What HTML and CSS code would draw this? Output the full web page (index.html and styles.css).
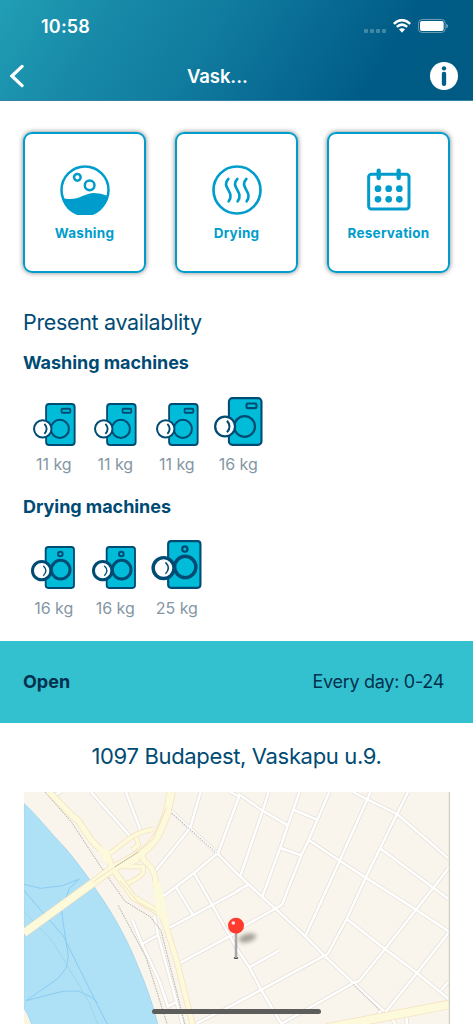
FILE: index.html
```
<!DOCTYPE html>
<html lang="en">
<head>
    <meta charset="UTF-8">
    <meta name="viewport" content="width=device-width, initial-scale=1.0">
    <title>Vaskapu</title>
    <link rel="stylesheet" href="styles.css">
</head>
<body>
    <svg class="symbols">
        <symbol id="washer" viewBox="0 0 128 128">
            <rect x="39" y="3" width="85" height="122" rx="9" fill="#00bcd8" stroke="#004b74" stroke-width="5.5"/>
            <rect x="85" y="17" width="26" height="12" rx="3" fill="none" stroke="#004b74" stroke-width="5.5"/>
            <circle cx="80" cy="77" r="27" fill="#00bcd8" stroke="#004b74" stroke-width="6"/>
            <circle cx="29" cy="77" r="26" fill="#fff" stroke="#004b74" stroke-width="6"/>
            <path d="M34 62q13 15 0 30" fill="none" stroke="#004b74" stroke-width="5.5"/>
        </symbol>
        <symbol id="dryer" viewBox="48 168 132 129">
            <rect x="92" y="171" width="85" height="123" rx="8" fill="#00bcd8" stroke="#004b74" stroke-width="5.5"/>
            <circle cx="136" cy="192" r="7" fill="none" stroke="#004b74" stroke-width="6"/>
            <circle cx="137" cy="239" r="28" fill="#00bcd8" stroke="#004b74" stroke-width="9"/>
            <circle cx="80" cy="242" r="27.5" fill="#fff" stroke="#004b74" stroke-width="9"/>
            <path d="M85 227q15 15 0 30" fill="none" stroke="#004b74" stroke-width="4"/>
        </symbol>
    </svg>

    <header>
        <div class="status-bar">
            <span class="time">10:58</span>
            <div class="status-icons">
                <div class="dots"><i></i><i></i><i></i><i></i></div>
                <svg class="wifi" viewBox="0 0 54 42">
                    <g fill="none" stroke="#fff" stroke-width="7.5">
                        <path d="M2.500 14.500Q27-8 51.500 14.500"/>
                        <path d="M11.500 23.500Q27 10 42.500 23.500"/>
                    </g>
                    <path d="M18 31q9-7 18 0l-9 10z" fill="#fff"/>
                </svg>
                <svg class="battery" viewBox="0 0 90 42">
                    <rect x="1.500" y="1.500" width="80" height="39" rx="11" fill="none" stroke="#fff" stroke-opacity=".4" stroke-width="3"/>
                    <rect x="6" y="6" width="71" height="30" rx="6" fill="#fff"/>
                    <path d="M85 14q5 2 5 7t-5 7z" fill="#fff" fill-opacity=".5"/>
                </svg>
            </div>
        </div>
        <div class="nav-bar">
            <svg class="back" viewBox="0 0 44 72"><path d="M38 6L6 36l32 30" fill="none" stroke="#fff" stroke-width="10" stroke-linecap="round"/></svg>
            <h1>Vask...</h1>
            <svg class="info" viewBox="0 0 84 84">
                <circle cx="42" cy="42" r="42" fill="#fff"/>
                <circle cx="42" cy="19" r="6.500" fill="#005e88"/>
                <rect x="35.500" y="29" width="13" height="43" rx="6" fill="#005e88"/>
            </svg>
        </div>
    </header>

    <main>
        <div class="cards">
            <a class="card">
                <svg viewBox="0 0 150 150">
                    <circle cx="75" cy="75" r="70.500" fill="none" stroke="#009dcc" stroke-width="7.500"/>
                    <circle cx="52" cy="37" r="10" fill="none" stroke="#009dcc" stroke-width="7.500"/>
                    <circle cx="89" cy="61" r="14.500" fill="none" stroke="#009dcc" stroke-width="7.500"/>
                    <path d="M6 98C50 113 70 84 102 84q20 0 42 9A70 70 0 0 1 6 98z" fill="#009dcc"/>
                </svg>
                <span>Washing</span>
            </a>
            <a class="card">
                <svg viewBox="0 0 150 150">
                    <g fill="none" stroke="#009dcc" stroke-width="8" stroke-linecap="round">
                        <circle cx="75" cy="75" r="70.500"/>
                        <path d="M49 42c-24 24 22 38 1 67M76 42c-24 24 22 38 1 67M103 42c-24 24 22 38 1 67"/>
                    </g>
                </svg>
                <span>Drying</span>
            </a>
            <a class="card">
                <svg viewBox="0 0 150 150">
                    <g fill="none" stroke="#009dcc" stroke-width="9">
                        <rect x="14" y="28" width="121" height="104" rx="8"/>
                        <path d="M44 17v22M104 17v22" stroke-width="13" stroke-linecap="round"/>
                    </g>
                    <g fill="#009dcc">
                        <circle cx="42" cy="71" r="10"/><circle cx="74" cy="71" r="10"/><circle cx="106" cy="71" r="10"/>
                        <circle cx="42" cy="103" r="10"/><circle cx="74" cy="103" r="10"/><circle cx="106" cy="103" r="10"/>
                    </g>
                </svg>
                <span>Reservation</span>
            </a>
        </div>

        <section class="availability">
            <h2>Present availablity</h2>
            <h3>Washing machines</h3>
            <div class="machines">
                <div class="machine"><svg class="washer"><use href="#washer"/></svg><span>11 kg</span></div>
                <div class="machine"><svg class="washer"><use href="#washer"/></svg><span>11 kg</span></div>
                <div class="machine"><svg class="washer"><use href="#washer"/></svg><span>11 kg</span></div>
                <div class="machine"><svg class="washer large"><use href="#washer"/></svg><span>16 kg</span></div>
            </div>
            <h3>Drying machines</h3>
            <div class="machines">
                <div class="machine"><svg class="dryer"><use href="#dryer"/></svg><span>16 kg</span></div>
                <div class="machine"><svg class="dryer"><use href="#dryer"/></svg><span>16 kg</span></div>
                <div class="machine"><svg class="dryer large"><use href="#dryer"/></svg><span>25 kg</span></div>
            </div>
        </section>

        <div class="opening">
            <strong>Open</strong>
            <span>Every day: 0-24</span>
        </div>

        <p class="address">1097 Budapest, Vaskapu u.9.</p>

        <div class="map">
            <svg viewBox="42 34 1278 699" preserveAspectRatio="none">
                <defs>
                    <filter id="blur" x="-50%" y="-50%" width="200%" height="200%"><feGaussianBlur stdDeviation="6"/></filter>
                    <linearGradient id="needle"><stop offset="0" stop-color="#808488"/><stop offset=".5" stop-color="#c4c7ca"/><stop offset="1" stop-color="#777"/></linearGradient>
                    <!-- side streets -->
                    <g id="streets">
                        <path d="M243 34L360 166M348 34L392 150M572 34L540 143L436 271M480 88L621 217L690 288M690 40L624 217L552 277L462 345L452 342M552 277L690 520M499 320L548 402M476 442L548 404L690 328M506 549L690 450M366 415L396 490L448 600L474 678L498 664M396 490L444 463M433 405L444 463L518 732M560 728L690 662M660 34L688 48M135 43L156 30"/>
                        <g transform="translate(678 0)">
                            <path d="M0 275L38 311L118 384L208 467L265 525L352 607L445 692M8 40L80 90L155 134M98 34L80 90L14 283M190 34L133 200L80 345M280 34L218 178L196 224L138 372L118 384L0 450M174 88L243 117M133 202L196 224M403 34L394 56L311 240L208 467M516 34L483 100L389 291L332 415L275 520L265 525L0 668M350 34L394 56L483 100L638 234M218 178L311 240L389 291L540 387L638 452M435 205L592 321L638 355M638 262L592 321L540 387L447 505L370 600L352 607L135 730M332 415L447 505L543 577L638 655M638 456L543 577L450 692M615 629L638 603M0 500L40 560L76 628L138 732M40 560L130 509M0 332L38 311M435 690L420 706M450 690L480 732M512 712V732"/>
                        </g>
                    </g>
                    <!-- main roads around the bridge -->
                    <g id="roads">
                        <path d="M42 457L306 265L395 216Q435 185 450 150L470 100L484 34" stroke-width="26"/>
                        <path d="M118 34L185 104L205 120L245 180L295 230L308 265L370 350L450 398" stroke-width="20"/>
                        <path d="M395 216L402 240Q430 260 435 290L450 390L472 450L500 540L548 732" stroke-width="18"/>
                        <path d="M300 218L360 172Q390 152 430 146M335 256L380 240L402 214M340 258H400V275Q390 292 352 308M378 170L386 192L366 208" stroke-width="15"/>
                    </g>
                </defs>
                <rect x="42" y="34" width="1278" height="699" fill="#f9f4ec"/>
                <path d="M42 69C80 102 110 145 170 207Q230 280 260 330C330 430 365 510 385 560Q420 640 444 733H66Q55 700 42 682z" fill="#aee1f6" stroke="#a3d8ee" stroke-width="3"/>
                <g fill="none" stroke="#8acbf3" stroke-width="3">
                    <path d="M42 311L92 323L157 315L208 295L178 324L154 385L160 430L175 525L168 563L142 595L48 660L158 632L206 631L245 650L263 666M42 330L160 466L263 674L293 732"/>
                    <path d="M42 392L130 485L235 660L264 732" stroke="#a0d5e9"/>
                </g>
                <path d="M42 705L53 733" stroke="#fbf7d2" stroke-width="8"/>
                <g fill="none" stroke-linejoin="round">
                    <use href="#streets" stroke="#e5e1da" stroke-width="12"/>
                    <use href="#streets" stroke="#fff" stroke-width="7.500"/>
                    <g stroke="#b5b1ac" stroke-width="3" stroke-dasharray="5 3">
                        <path d="M105 34L185 125L270 255L345 362L420 408L453 450L525 732M325 375L408 530L472 732M480 92L620 217M1030 610L1110 690"/>
                    </g>
                    <g stroke="#f4dfbf"><use href="#roads"/></g>
                    <g stroke="#fcfadb">
                        <path d="M42 457L306 265L395 216Q435 185 450 150L470 100L484 34" stroke-width="22"/>
                        <path d="M118 34L185 104L205 120L245 180L295 230L308 265L370 350L450 398" stroke-width="16"/>
                        <path d="M395 216L402 240Q430 260 435 290L450 390L472 450L500 540L548 732" stroke-width="14"/>
                        <path d="M300 218L360 172Q390 152 430 146M335 256L380 240L402 214M340 258H400V275Q390 292 352 308M378 170L386 192L366 208" stroke-width="11"/>
                        <path d="M205 118L250 180L300 215L308 260L285 244z" fill="#fcfadb" stroke="none"/>
                        <path d="M428 300L452 305L472 405L480 450L440 400z" fill="#fcfadb" stroke="none"/>
                    </g>
                    <path d="M248 305L310 262L385 214L430 175L470 80M330 300L385 365L440 395" stroke="#eed1b5" stroke-width="2"/>
                    <path d="M315 258L385 214" stroke="#aaa7a2" stroke-width="3" stroke-dasharray="5 3"/>
                    <path d="M950 742L1320 671" stroke="#f4dfbf" stroke-width="28"/>
                    <path d="M950 742L1320 671" stroke="#fcfadb" stroke-width="24"/>
                    <path d="M1318 34V733" stroke="#c9c5bf" stroke-width="3"/>
                </g>
                <!-- pin -->
                <ellipse cx="712" cy="472" rx="27" ry="12" transform="rotate(-15 712 472)" fill="#777269" opacity=".65" filter="url(#blur)"/>
                <ellipse cx="678" cy="532" rx="7" ry="3" fill="#444"/>
                <rect x="674.500" y="450" width="7" height="82" fill="url(#needle)"/>
                <circle cx="678" cy="435" r="24" fill="#ff3b30"/>
                <circle cx="670" cy="427" r="5.500" fill="#ffe3df"/>
            </svg>
        </div>
    </main>
    <div class="home-indicator"></div>
</body>
</html>
```
FILE: styles.css
```
* {
    box-sizing: border-box;
}

body {
    margin: 0;
    height: 1024px;
    overflow: hidden;
    background-color: #fff;
    color: #004b74;
    font-family: Inter, "Liberation Sans", sans-serif;
}

.symbols {
    display: none;
}

svg {
    display: block;
}

h1, h2, h3, p {
    margin: 0;
}

header {
    height: 101px;
    background: linear-gradient(122deg, #219eb5 0%, #188aa8 22%, #107b9e 44%, #096c94 60%, #005c86 79%, #005a84 100%);
    border-bottom: 1px solid #2f84a3;
    color: #fff;
}

.status-bar {
    display: flex;
    justify-content: space-between;
    height: 52px;
    padding: 0 25px 0 41px;
}

.time {
    padding-top: 15px;
    font-size: 18px;
    line-height: 23px;
    font-weight: 600;
    letter-spacing: 0.2px;
}

.status-icons {
    display: flex;
    align-items: flex-start;
    padding-top: 19px;
}

.dots {
    display: flex;
    gap: 2px;
    margin: 10px 7px 0 0;
}

.dots i {
    width: 4px;
    height: 4px;
    border-radius: 1px;
    background-color: rgba(255, 255, 255, 0.25);
}

.wifi {
    width: 18px;
    height: 14px;
    margin-right: 7px;
}

.battery {
    width: 30px;
    height: 14px;
}

.nav-bar {
    display: flex;
    align-items: center;
    height: 48px;
    padding: 0 15px 0 10px;
}

.back {
    width: 14px;
    height: 24px;
}

.nav-bar h1 {
    flex: 1;
    margin-left: 163px;
    font-size: 18.5px;
    font-weight: 600;
    letter-spacing: -0.1px;
}

.info {
    width: 28px;
    height: 28px;
}

.cards {
    display: flex;
    justify-content: space-between;
    padding: 31px 23px 0;
}

.card {
    width: 123px;
    height: 141px;
    padding-top: 30.5px;
    display: flex;
    flex-direction: column;
    align-items: center;
    border: 2px solid #009dcc;
    border-radius: 9px;
    box-shadow: 0 0 5px rgba(0, 0, 0, 0.5);
    color: #009dcc;
    font-size: 13.5px;
    font-weight: 700;
    letter-spacing: 0.25px;
}

.card svg {
    width: 50px;
    height: 50px;
    margin-bottom: 9px;
}

.card span {
    line-height: 18px;
}

.availability {
    padding: 35px 23px 0;
}

.availability h2 {
    font-size: 21.5px;
    line-height: 28px;
    font-weight: 400;
    letter-spacing: -0.33px;
}

.availability h3 {
    margin-top: 15px;
    font-size: 18px;
    line-height: 24px;
    font-weight: 700;
    letter-spacing: -0.05px;
}

.machines + h3 {
    margin-top: 21px;
}

.machines {
    display: flex;
}

.machine {
    width: 61.5px;
    height: 99px;
    display: flex;
    flex-direction: column;
    align-items: center;
    justify-content: flex-end;
    color: #8496a4;
    font-size: 16px;
    line-height: 20px;
}

.machine span {
    margin-top: 8px;
}

.washer {
    width: 43px;
    height: 43px;
    margin-left: 1px;
}

.washer.large {
    width: 49px;
    height: 49px;
}

.dryer {
    width: 44px;
    height: 43px;
    margin: 0 2px 1px 0;
}

.dryer.large {
    width: 51px;
    height: 49px;
    margin-right: 0;
}

.opening {
    display: flex;
    align-items: center;
    justify-content: space-between;
    height: 82px;
    margin-top: 22.67px;
    padding: 0 29px 0 23px;
    background-color: #33c1cf;
    color: #00304d;
    font-size: 18px;
}

.opening span {
    letter-spacing: -0.3px;
}

.address {
    padding-top: 19px;
    text-align: center;
    font-size: 22px;
    line-height: 28px;
    letter-spacing: -0.34px;
}

.map {
    margin: 22px 23px 0 24px;
    height: 233px;
}

.map svg {
    width: 100%;
    height: 100%;
}

.home-indicator {
    position: absolute;
    left: 152px;
    top: 1009px;
    width: 169px;
    height: 5px;
    border-radius: 3px;
    background-color: #5d5d5b;
}
```
